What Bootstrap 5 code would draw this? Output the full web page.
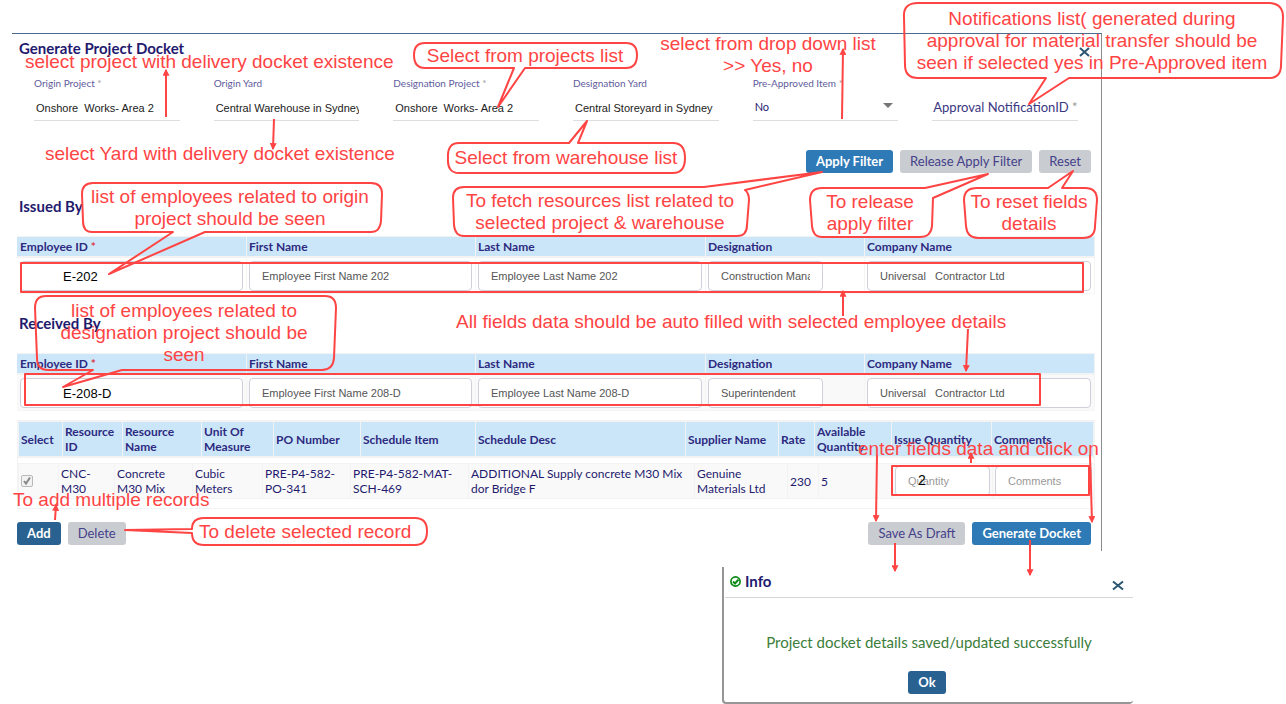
<!DOCTYPE html>
<html lang="en">
<head>
<meta charset="utf-8">
<meta name="viewport" content="width=device-width, initial-scale=1">
<title>Generate Project Docket</title>
<link href="https://cdn.jsdelivr.net/npm/bootstrap@5.3.0/dist/css/bootstrap.min.css" rel="stylesheet">
<style>
:root { --ink: #1f1a6e; --line: #dedede; --head: #cce6f9; --red: #ff4444; }
body { font-family: Lato, sans-serif; font-size: 12px; line-height: 15px; color: var(--ink); background: #fff; }
.docket { margin: 33px 184px 0 12px; border-top: 1px solid #4c6a90; border-right: 1px solid #8c8c8c; padding: 4px 6px 6px 5px; }
.heading { font-size: 15px; line-height: 20px; font-weight: 700; margin: 0; padding-left: 2px; }
.section-title { margin-bottom: 20px; }
.filter-bar { margin-top: 29px; }
.issued { margin-top: 23px; }
.received { margin-top: 19px; }
.button-row { gap: 7px; }
.x-btn { border: 0; background: none; padding: 0; line-height: 0; }
.docket .x-btn { height: 20px; padding-top: 4px; }
.fields { margin-top: 19px; }
.fields > div { padding: 0 17px; }
.fields label.top { display: block; font-size: 10px; line-height: 12px; height: 12px; color: #5f5b9c; }
.star { color: #999; }
.line-box { height: 32px; border: 0; border-bottom: 1px solid var(--line); border-radius: 0; padding: 7px 0 0 2px; background-color: transparent; font-size: 11px; color: #222; width: 100%; }
input.line-box { font-family: "Liberation Sans", sans-serif; }
select.line-box { color: var(--ink); appearance: none; padding-top: 4px; }
.caret { right: 22px; bottom: 13px; border: 5px solid transparent; border-top-color: #757575; border-bottom: 0; }
.note-label { font-size: 13px; line-height: 18px; color: #3b377f; white-space: nowrap; padding-left: 1px; }
.line-box.wrap-box { padding-top: 4px; }
.wrap-box input { width: 0; }
.docket .btn, .info .btn { --bs-btn-padding-x: 10px; --bs-btn-padding-y: 2px; --bs-btn-font-size: 13px; --bs-btn-line-height: 19px; --bs-btn-border-radius: 3px; border: 0; }
.btn-blue { --bs-btn-bg: #2e7ab6; --bs-btn-color: #fff; --bs-btn-hover-bg: #286ca2; --bs-btn-hover-color: #fff; --bs-btn-font-weight: 700; }
.btn-navy { --bs-btn-bg: #296190; --bs-btn-color: #fff; --bs-btn-hover-bg: #225279; --bs-btn-hover-color: #fff; --bs-btn-font-weight: 700; }
.btn-grey { --bs-btn-bg: #c9ccd1; --bs-btn-color: #45418a; --bs-btn-hover-bg: #bcc0c6; --bs-btn-hover-color: #45418a; }
.grid-table { width: 100%; table-layout: fixed; border-collapse: separate; border-spacing: 0; }
.grid-table th { background: var(--head); font-weight: 700; color: #2d2a80; border-right: 1px solid #f3f3f3; }
.people th { height: 22px; padding: 0 2px; border-top: 1px solid #f3f3f3; border-bottom: 2px solid #f3f3f3; }
.people td { padding: 3px 3px 2px 2px; border: 1px solid #f5f5f5; border-top: 0; border-left: 0; }
.people th:first-child, .people td:first-child { padding-left: 3px; }
.people th:nth-child(1), .people th:nth-child(3), .people th:nth-child(5) { width: 230px; }
.people th:nth-child(2) { width: 229px; }
.people th:nth-child(4) { width: 159px; }
.cell-box { display: block; width: 100%; height: 30px; border: 1px solid #ced0dc; border-radius: 4px; padding: 0 12px; font: 11px "Liberation Sans", sans-serif; color: #555; background: #fff; }
.cell-box.post { max-width: 115px; }
.cell-box.id-box { padding-left: 42px; font-size: 13px; color: #000; }
.cell-box::placeholder { color: #999; opacity: 1; }
.shade td { background: #f9f9f9; }
.items { border: 1px solid #f3f3f3; margin: 9px 0 13px; padding-bottom: 9px; }
.items-head { border-top: 1px solid #f3f3f3; border-bottom: 2px solid #f3f3f3; border-left: 1px solid #f3f3f3; margin-bottom: 5px; }
.items-head th { height: 34px; padding: 2px; vertical-align: middle; font-weight: 700; }
.items-body td { height: 36px; padding: 2px; vertical-align: top; border: 1px solid #f3f3f3; border-right: 0; font-size: 12px; }
.items-body td.mid { vertical-align: middle; }
.tick { appearance: none; display: block; width: 12px; height: 12px; margin: 0; border: 1px solid #b9b9b9; border-radius: 2px; background: #f2f2f2 url("data:image/svg+xml,%3Csvg xmlns='http://www.w3.org/2000/svg' viewBox='0 0 10 10'%3E%3Cpath d='M2 5l2 2.5 4-6' fill='none' stroke='%23888' stroke-width='2'/%3E%3C/svg%3E") center/10px no-repeat; }
.info { width: 411px; margin: 16px 153px 0 auto; height: 137px; border: 1px solid #969696; border-width: 0 0 2px 2px; border-radius: 0 0 4px 4px; padding: 4px 0 8px 1px; }
.info header { border-bottom: 1px solid #d5d5d5; height: 27px; padding: 0 9px 0 5px; }
.info p { font-size: 15px; line-height: 20px; color: #3c7d3c; margin: 34px 0 19px; }
.notes { left: 0; top: 0; pointer-events: none; z-index: 5; fill: none; stroke: var(--red); stroke-width: 2; stroke-linejoin: round; }
.notes text { fill: var(--red); stroke: none; font: 19px "Liberation Sans", sans-serif; }
.notes .arrows path { marker-end: url(#tip); }
.notes .mid-text { text-anchor: middle; }
.notes .typed { fill: #000; font-size: 14px; }
</style>
</head>
<body class="position-relative">
<main class="docket">
  <div class="d-flex justify-content-between">
    <h1 class="heading">Generate Project Docket</h1>
    <button class="x-btn" type="button" aria-label="Close"><svg width="22" height="20" viewBox="0 0 22 20" fill="none" stroke="#2a5573" stroke-width="2"><path d="M7 6l9 8M16 6l-9 8"/></svg></button>
  </div>

  <form class="row row-cols-6 g-0 fields">
    <div><label class="top" for="oproj">Origin Project <span class="star">*</span></label><input class="line-box" id="oproj" value="Onshore&nbsp; Works- Area 2"></div>
    <div><label class="top" for="oyard">Origin Yard</label><input class="line-box" id="oyard" value="Central Warehouse in Sydney"></div>
    <div><label class="top" for="dproj">Designation Project <span class="star">*</span></label><input class="line-box" id="dproj" value="Onshore&nbsp; Works- Area 2"></div>
    <div><label class="top" for="dyard">Designation Yard</label><input class="line-box" id="dyard" value="Central Storeyard in Sydney"></div>
    <div class="position-relative"><label class="top" for="pre">Pre-Approved Item <span class="star">*</span></label><select class="line-box" id="pre"><option>No</option><option>Yes</option></select><span class="caret position-absolute"></span></div>
    <div class="d-flex align-items-end"><div class="line-box wrap-box d-flex align-items-center ps-0"><label class="note-label" for="nid">Approval NotificationID <span class="star">*</span></label><input class="border-0 p-0 flex-fill" id="nid"></div></div>
  </form>

  <div class="d-flex justify-content-end pe-1 button-row filter-bar">
    <button class="btn btn-blue" type="button">Apply Filter</button>
    <button class="btn btn-grey" type="button">Release Apply Filter</button>
    <button class="btn btn-grey" type="button">Reset</button>
  </div>

  <h2 class="heading section-title issued">Issued By</h2>
  <table class="grid-table people">
    <thead><tr><th>Employee ID <span class="text-danger">*</span></th><th>First Name</th><th>Last Name</th><th>Designation</th><th>Company Name</th></tr></thead>
    <tbody><tr>
      <td><input class="cell-box id-box" aria-label="Employee ID" value="E-202"></td>
      <td><input class="cell-box" aria-label="First Name" value="Employee First Name 202"></td>
      <td><input class="cell-box" aria-label="Last Name" value="Employee Last Name 202"></td>
      <td><input class="cell-box post" aria-label="Designation" value="Construction Manager"></td>
      <td><input class="cell-box" aria-label="Company Name" value="Universal&nbsp;&nbsp; Contractor Ltd"></td>
    </tr></tbody>
  </table>

  <h2 class="heading section-title received">Received By</h2>
  <table class="grid-table people">
    <thead><tr><th>Employee ID <span class="text-danger">*</span></th><th>First Name</th><th>Last Name</th><th>Designation</th><th>Company Name</th></tr></thead>
    <tbody><tr class="shade">
      <td><input class="cell-box id-box" aria-label="Employee ID" value="E-208-D"></td>
      <td><input class="cell-box" aria-label="First Name" value="Employee First Name 208-D"></td>
      <td><input class="cell-box" aria-label="Last Name" value="Employee Last Name 208-D"></td>
      <td><input class="cell-box post" aria-label="Designation" value="Superintendent"></td>
      <td><input class="cell-box" aria-label="Company Name" value="Universal&nbsp;&nbsp; Contractor Ltd"></td>
    </tr></tbody>
  </table>

  <div class="items">
    <table class="grid-table items-head">
      <colgroup><col style="width:44px"><col style="width:60px"><col style="width:79px"><col style="width:72px"><col style="width:87px"><col style="width:115px"><col style="width:210px"><col style="width:93px"><col style="width:36px"><col style="width:77px"><col style="width:100px"><col style="width:102px"></colgroup>
      <thead><tr><th>Select</th><th>Resource ID</th><th>Resource Name</th><th>Unit Of Measure</th><th>PO Number</th><th>Schedule Item</th><th>Schedule Desc</th><th>Supplier Name</th><th>Rate</th><th>Available Quantity</th><th>Issue Quantity</th><th>Comments</th></tr></thead>
    </table>
    <table class="grid-table items-body">
      <colgroup><col style="width:40px"><col style="width:56px"><col style="width:78px"><col style="width:70px"><col style="width:88px"><col style="width:118px"><col style="width:226px"><col style="width:93px"><col style="width:31px"><col style="width:74px"><col style="width:100px"><col style="width:102px"></colgroup>
      <tbody><tr class="shade">
        <td class="mid"><input class="tick" type="checkbox" aria-label="Select CNC-M30" checked></td>
        <td>CNC-M30</td><td>Concrete M30 Mix</td><td>Cubic Meters</td><td>PRE-P4-582-PO-341</td><td>PRE-P4-582-MAT-SCH-469</td><td>ADDITIONAL Supply concrete M30 Mix dor Bridge F</td><td>Genuine Materials Ltd</td><td class="mid">230</td><td class="mid">5</td>
        <td><input class="cell-box" aria-label="Quantity" placeholder="Quantity"></td>
        <td><input class="cell-box" aria-label="Comments" placeholder="Comments"></td>
      </tr></tbody>
    </table>
  </div>

  <div class="d-flex pe-1 button-row">
    <button class="btn btn-navy" type="button">Add</button>
    <button class="btn btn-grey me-auto" type="button">Delete</button>
    <button class="btn btn-grey" type="button">Save As Draft</button>
    <button class="btn btn-blue" type="button">Generate Docket</button>
  </div>
</main>

<section class="info" role="dialog" aria-labelledby="info-title">
  <header class="d-flex">
    <svg class="me-1" width="11" height="20" viewBox="0 0 11 20" fill="none" stroke="#0a8a14" aria-hidden="true"><circle cx="5.5" cy="10.5" r="4.6" stroke-width="1.7"/><path d="M3 10.5l2 2 3.500-4" stroke-width="1.9"/></svg>
    <h2 class="heading me-auto p-0" id="info-title">Info</h2>
    <button class="x-btn" type="button" aria-label="Close"><svg width="12" height="28" viewBox="0 0 12 28" fill="none" stroke="#2a5573" stroke-width="2"><path d="M1 10.500l10 8M11 10.500l-10 8"/></svg></button>
  </header>
  <p class="text-center">Project docket details saved/updated successfully</p>
  <div class="text-center lh-1 pe-1"><button class="btn btn-navy" type="button">Ok</button></div>
</section>

<svg class="notes position-absolute" width="1286" height="704">
  <defs><marker id="tip" viewBox="0 0 6 6" refX="5" refY="3" markerWidth="7" markerHeight="7" markerUnits="userSpaceOnUse" orient="auto"><path d="M0 0L6 3L0 6Z" fill="#ff4444" stroke="none"/></marker></defs>
  <!-- callout outlines -->
  <path d="M514 68H425Q414 68 414 55Q414 43 425 43H626Q637 43 637 55Q637 68 626 68H525L498 107Z"/>
  <path d="M569 143H459Q447 143 448 158Q447 173 459 173H673Q685 173 685 158Q685 143 673 143H578L587 121Z"/>
  <path d="M1046 78H918Q905 78 905 65L904 17Q903 3 918 3H1270Q1283 4 1283 17L1281 65Q1281 78 1269 78H1069L1029 104Z"/>
  <path d="M173 232H92Q83 232 83 221L82 194Q82 183 93 183H371Q382 183 382 194L381 221Q380 232 371 232H205L109 274Z"/>
  <path d="M704 187H464Q453 187 453 198L454 225Q455 236 464 236H737Q747 236 747 225L749 200Q749 193 745 190L822 172Z"/>
  <path d="M925 188H822Q810 188 810 200L812 226Q813 237 822 237H920Q931 237 932 226L933 198L988 174Z"/>
  <path d="M1048 188H977Q964 188 964 200L966 226Q967 238 978 238H1083Q1095 238 1095 226L1097 200Q1097 188 1085 188H1062L1073 171Z"/>
  <path d="M93 370H48Q37 370 37 358L35 308Q35 296 46 296H325Q336 296 336 308L334 358Q333 370 322 370H122L63 387Z"/>
  <path d="M192 529Q192 518 204 518H415Q427 518 427 531Q427 545 415 545H204Q192 545 192 533L125 530Z"/>
  <!-- highlighted rows -->
  <path d="M21 263H1083V292H21ZM25 374H1040V405H25ZM892 466H1089V495H892Z"/>
  <g class="arrows">
    <path d="M166 117V70"/><path d="M274 119L273 149"/>
    <path d="M842 119L843 49"/><path d="M843 316V291"/>
    <path d="M968 329L966 371"/><path d="M971 463V453"/>
    <path d="M877 455L876 521"/><path d="M1090 455L1092 522"/>
    <path d="M55 520L56 505"/><path d="M895 543V571"/>
    <path d="M1030 540V575"/>
  </g>
  <text x="25" y="68">select project with delivery docket existence</text>
  <text x="45" y="160">select Yard with delivery docket existence</text>
  <text x="456" y="328">All fields data should be auto filled with selected employee details</text>
  <text x="858" y="455">enter fields data and click on</text>
  <text x="13" y="506">To add multiple records</text>
  <text x="199" y="538">To delete selected record</text>
  <text class="typed" x="918" y="485">2</text>
  <g class="mid-text">
    <text x="525" y="62">Select from projects list</text>
    <text x="768" y="50">select from drop down list<tspan x="768" dy="22">&gt;&gt; Yes, no</tspan></text>
    <text x="1092" y="25">Notifications list( generated during<tspan x="1092" dy="22">approval for material transfer should be</tspan><tspan x="1092" dy="22">seen if selected yes in Pre-Approved item</tspan></text>
    <text x="566" y="164">Select from warehouse list</text>
    <text x="230" y="203">list of employees related to origin<tspan x="230" dy="22">project should be seen</tspan></text>
    <text x="600" y="207">To fetch resources list related to<tspan x="600" dy="22">selected project &amp; warehouse</tspan></text>
    <text x="870" y="208">To release<tspan x="870" dy="22">apply filter</tspan></text>
    <text x="1029" y="208">To reset fields<tspan x="1029" dy="22">details</tspan></text>
    <text x="184" y="317">list of employees related to<tspan x="184" dy="22">designation project should be</tspan><tspan x="184" dy="22">seen</tspan></text>
  </g>
</svg>
<script src="https://cdn.jsdelivr.net/npm/bootstrap@5.3.0/dist/js/bootstrap.bundle.min.js"></script>
</body>
</html>
